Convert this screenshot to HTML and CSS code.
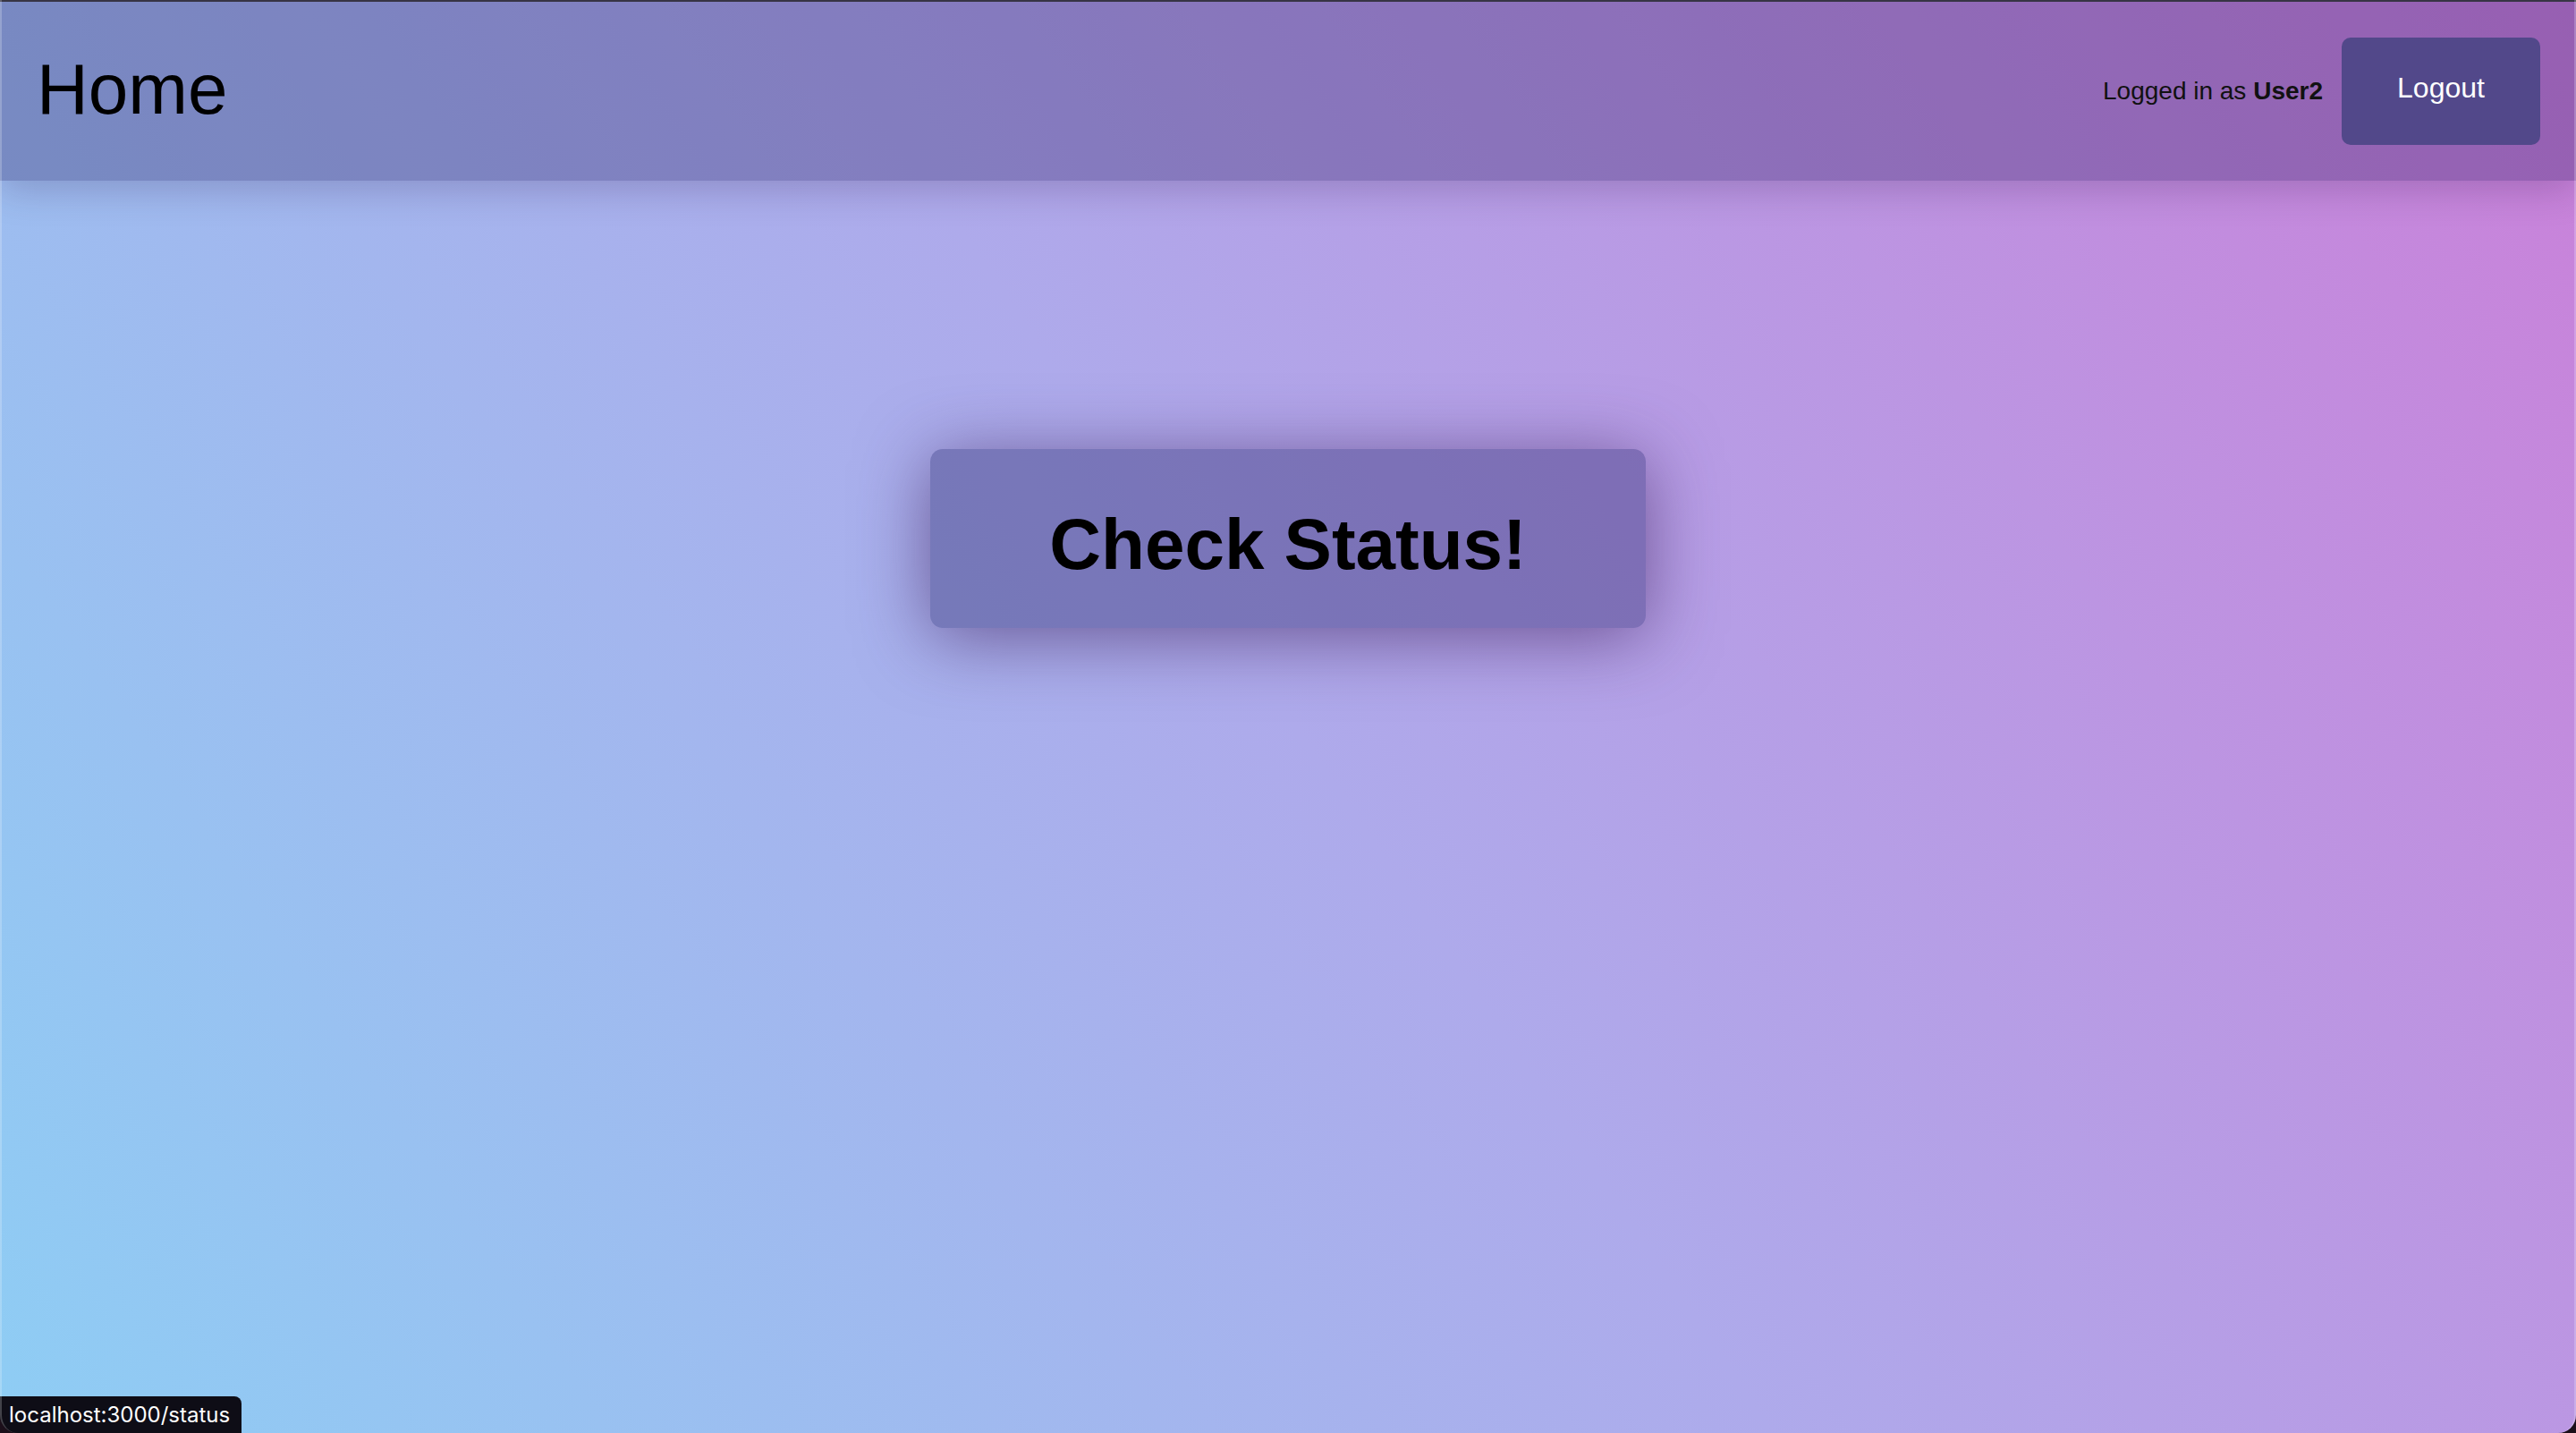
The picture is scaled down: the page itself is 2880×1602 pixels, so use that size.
FILE: index.html
```html
<!DOCTYPE html>
<html lang="en">
<head>
<meta charset="utf-8">
<title>Home</title>
<link rel="stylesheet" href="styles.css">
</head>
<body>
<div class="app">
  <header class="topbar">
    <h1 class="title">Home</h1>
    <div class="user-area">
      <span class="user-label">Logged in as <strong>User2</strong></span>
      <button class="logout-btn" type="button">Logout</button>
    </div>
  </header>
  <main class="content">
    <a class="status-btn" href="/status">Check Status!</a>
  </main>
</div>
<div class="status-url">localhost:3000/status</div>
<div class="window-frame"></div>
</body>
</html>
```
FILE: styles.css
```css
html, body {
  margin: 0;
  padding: 0;
  height: 100%;
}

body {
  font-family: "Liberation Sans", Arial, Helvetica, sans-serif;
  background: linear-gradient(56deg, #8ecdf4 0%, #aeaaeb 50%, #ca80d9 100%);
  overflow: hidden;
}

.app {
  height: 100%;
  display: flex;
  flex-direction: column;
  border-top: 2px solid #3a3946;
  box-sizing: border-box;
}

.topbar {
  height: 200px;
  flex: 0 0 200px;
  display: flex;
  align-items: center;
  justify-content: space-between;
  padding: 0 40px 0 41px;
  background: rgba(20, 10, 80, 0.28);
  box-shadow: 0 8px 40px rgba(30, 10, 60, 0.22);
  position: relative;
  z-index: 1;
}

.title {
  margin: 0;
  padding-bottom: 5px;
  font-size: 80px;
  font-weight: 400;
  color: #000;
  line-height: normal;
}

.user-area {
  display: flex;
  align-items: center;
  gap: 21px;
}

.user-label {
  font-size: 28px;
  color: #111;
}

.user-label strong {
  font-weight: 700;
}

.logout-btn {
  width: 222px;
  height: 120px;
  border: none;
  border-radius: 10px;
  background: #52488a;
  color: #fff;
  font-family: "Liberation Sans", Arial, Helvetica, sans-serif;
  font-size: 32px;
  padding: 0 0 8px 0;
  cursor: pointer;
}

.content {
  flex: 1;
  display: flex;
  flex-direction: column;
  align-items: center;
  padding-top: 300px;
}

.status-btn {
  width: 800px;
  height: 200px;
  box-sizing: border-box;
  display: flex;
  align-items: center;
  justify-content: center;
  padding-top: 14px;
  border-radius: 14px;
  background: rgba(22, 20, 92, 0.35);
  box-shadow: 0 10px 80px rgba(60, 30, 90, 0.6);
  color: #000;
  font-size: 80px;
  font-weight: 700;
  text-decoration: none;
}

.status-url {
  position: fixed;
  left: 0;
  bottom: 0;
  height: 41px;
  line-height: 41px;
  padding: 0 14px 0 10px;
  width: 246px;
  background: #0e0d16;
  color: #fff;
  font-family: Inter, "Noto Sans", sans-serif;
  font-size: 24px;
  border-top-right-radius: 8px;
  white-space: nowrap;
  z-index: 3;
}

.window-frame {
  position: fixed;
  inset: 0;
  pointer-events: none;
  border-left: 2px solid rgba(255, 255, 255, 0.22);
  border-right: 2px solid rgba(255, 255, 255, 0.22);
  border-radius: 0 0 20px 20px;
  box-shadow: 0 0 0 40px #1c0f1a;
  z-index: 4;
}
```
